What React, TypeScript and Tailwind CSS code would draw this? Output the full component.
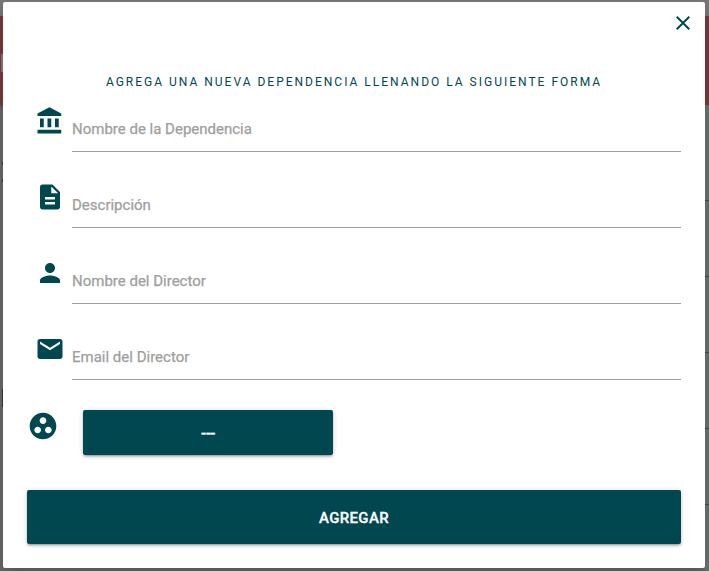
import type { ReactNode } from "react";

const icons = {
  bank: "M4 10v7h3v-7H4zm6 0v7h3v-7h-3zM2 22h19v-3H2v3zm14-12v7h3v-7h-3zM11.5 1L2 6v2h19V6l-9.5-5z",
  description:
    "M14 2H6c-1.1 0-1.99.9-1.99 2L4 20c0 1.1.89 2 1.99 2H18c1.1 0 2-.9 2-2V8l-6-6zm2 16H8v-2h8v2zm0-4H8v-2h8v2zm-3-5V3.5L18.5 9H13z",
  person:
    "M12 12c2.21 0 4-1.79 4-4s-1.79-4-4-4-4 1.79-4 4 1.79 4 4 4zm0 2c-2.67 0-8 1.34-8 4v2h16v-2c0-2.66-5.33-4-8-4z",
  email:
    "M20 4H4c-1.1 0-1.99.9-1.99 2L2 18c0 1.1.9 2 2 2h16c1.1 0 2-.9 2-2V6c0-1.1-.9-2-2-2zm0 4l-8 5-8-5V6l8 5 8-5v2z",
  group:
    "M12 2C6.48 2 2 6.48 2 12s4.48 10 10 10 10-4.48 10-10S17.52 2 12 2zM8 17.5c-1.38 0-2.5-1.12-2.5-2.5s1.12-2.5 2.5-2.5 2.5 1.12 2.5 2.5-1.12 2.5-2.5 2.5zM9.5 8c0-1.38 1.12-2.5 2.5-2.5s2.5 1.12 2.5 2.5-1.12 2.5-2.5 2.5S9.5 9.38 9.5 8zm6.5 9.5c-1.38 0-2.5-1.12-2.5-2.5s1.12-2.5 2.5-2.5 2.5 1.12 2.5 2.5-1.12 2.5-2.5 2.5z",
  close:
    "M19 6.41L17.59 5 12 10.59 6.41 5 5 6.41 10.59 12 5 17.59 6.41 19 12 13.41 17.59 19 19 17.59 13.41 12z",
};

function Icon({ name, className }: { name: keyof typeof icons; className: string }) {
  return (
    <svg viewBox="0 0 24 24" fill="currentColor" className={`shrink-0 ${className}`}>
      <path d={icons[name]} />
    </svg>
  );
}

function Field({ icon, children }: { icon: keyof typeof icons; children: ReactNode }) {
  return (
    <label className="flex h-[76px] items-start">
      <Icon name={icon} className="ml-[7.5px] mt-[4.6px] size-[30px]" />
      <span className="ml-auto block h-[51px] w-[609px] border-b border-[#9e9e9e] pt-[16px] text-[15px] leading-6 text-[#9e9e9e] [-webkit-text-stroke:0.25px_#9e9e9e]">
        {children}
      </span>
    </label>
  );
}

function Backdrop() {
  return (
    <div className="h-full bg-[#686868]">
      <div className="h-4 bg-[#777777]" />
      <div className="flex h-[89px] items-center bg-[#7b383b] shadow-[0_2px_4px_rgba(0,0,0,0.25)]">
        <div className="mt-1 h-[18px] w-[3px] border-l border-[#7b383b] bg-[#8d7477]" />
      </div>
      <div className="flex justify-between">
        <div className="w-[3px] pl-[2px] pt-[57px]">
          <div className="h-[3px] bg-[#24483f]" />
          <div className="mt-[14px] h-[3px] bg-[#24483f]" />
          <div className="mt-[207px] h-[18px] bg-[#263d40]" />
        </div>
        <div className="w-1 bg-[#6c706f] pt-5">
          {[0, 1, 2, 3, 4].map((row) => (
            <div key={row} className="h-[76px] border-b border-[#444646]" />
          ))}
          <div className="h-[66px]" />
        </div>
      </div>
    </div>
  );
}

export default function App() {
  return (
    <div className="relative h-[571px] w-[709px] overflow-hidden font-['Roboto',sans-serif] text-[#00474f]">
      <Backdrop />
      <div className="absolute left-[3px] top-[2px] flex h-[566px] w-[702px] flex-col rounded-[2px] bg-white px-6 shadow-[0_8px_16px_rgba(0,0,0,0.18)]">
        <button className="-mr-[14px] mt-[9px] self-end" aria-label="Cerrar">
          <Icon name="close" className="size-6" />
        </button>
        <h1 className="mt-[38px] h-[28px] text-center text-[12px] leading-[18px] tracking-[2px] whitespace-nowrap">
          AGREGA UNA NUEVA DEPENDENCIA LLENANDO LA SIGUIENTE FORMA
        </h1>
        <form>
          <Field icon="bank">Nombre de la Dependencia</Field>
          <Field icon="description">Descripción</Field>
          <Field icon="person">Nombre del Director</Field>
          <Field icon="email">Email del Director</Field>
          <div className="flex items-start pt-[5px]">
            <Icon name="group" className="size-8" />
            <button
              type="button"
              className="ml-6 h-[45px] w-[250px] rounded-[2px] bg-[#00474f] pt-0.5 text-[15px] font-medium tracking-[-0.5px] text-white shadow-[0_2px_2px_0_rgba(0,0,0,0.14),0_3px_1px_-2px_rgba(0,0,0,0.12),0_1px_5px_0_rgba(0,0,0,0.2)] [-webkit-text-stroke:0.4px_#fff]"
            >
              ---
            </button>
          </div>
          <button
            type="button"
            className="mt-[35px] h-[54px] w-full rounded-[2px] bg-[#00474f] pt-0.5 text-[15px] font-medium tracking-[0.35px] text-white shadow-[0_2px_2px_0_rgba(0,0,0,0.14),0_3px_1px_-2px_rgba(0,0,0,0.12),0_1px_5px_0_rgba(0,0,0,0.2)] [-webkit-text-stroke:0.3px_#fff]"
          >
            AGREGAR
          </button>
        </form>
      </div>
    </div>
  );
}
